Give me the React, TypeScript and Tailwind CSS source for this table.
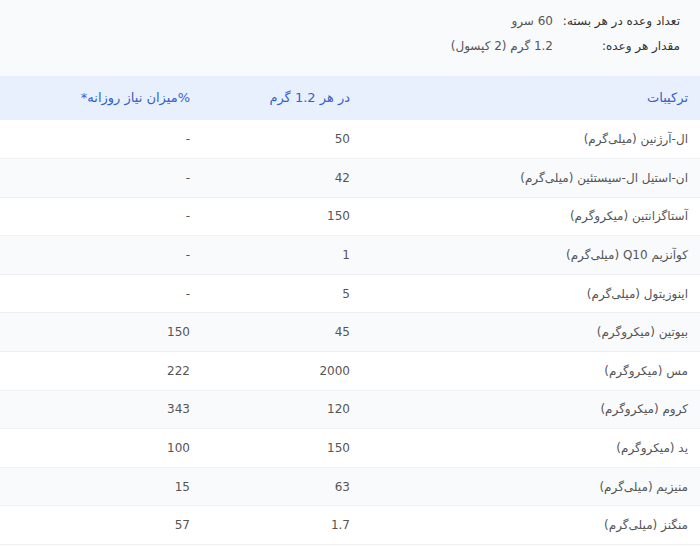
const rows: [string, string, string][] = [
  ['ال-آرژنین (میلی‌گرم)', '50', '-'],
  ['ان-استیل ال-سیستئین (میلی‌گرم)', '42', '-'],
  ['آستاگزانتین (میکروگرم)', '150', '-'],
  ['کوآنزیم Q10 (میلی‌گرم)', '1', '-'],
  ['اینوزیتول (میلی‌گرم)', '5', '-'],
  ['بیوتین (میکروگرم)', '45', '150'],
  ['مس (میکروگرم)', '2000', '222'],
  ['کروم (میکروگرم)', '120', '343'],
  ['ید (میکروگرم)', '150', '100'],
  ['منیزیم (میلی‌گرم)', '63', '15'],
  ['منگنز (میلی‌گرم)', '1.7', '57'],
];

export default function App() {
  return (
    <div
      dir="rtl"
      className="w-[700px] h-[547px] overflow-hidden bg-white text-[#555]"
      style={{ fontFamily: 'Tahoma, "DejaVu Sans", sans-serif' }}
    >
      {/* Serving info */}
      <div className="h-[76px] bg-[#f9fafb] pr-5 pt-[12px] text-[12px] leading-[18px]">
        <div className="flex">
          <span className="w-[127px] text-[#333]">تعداد وعده در هر بسته:</span>
          <span>60 سرو</span>
        </div>
        <div className="flex mt-[7px]">
          <span className="w-[127px] text-[#333]">مقدار هر وعده:</span>
          <span>1.2 گرم (2 کپسول)</span>
        </div>
      </div>

      {/* Table */}
      <table className="w-full border-collapse text-[12px]">
        <thead>
          <tr className="bg-[#e9f0fd] h-[44px] text-[#3461c9] text-[13px]">
            <th className="w-[338px] text-right font-normal px-3">ترکیبات</th>
            <th className="w-[160px] text-right font-normal px-3">در هر 1.2 گرم</th>
            <th className="text-right font-normal px-3">%میزان نیاز روزانه*</th>
          </tr>
        </thead>
        <tbody>
          {rows.map(([name, amount, daily], idx) => (
            <tr
              key={idx}
              className={`h-[38.6px] border-b border-[#eceef1] ${idx % 2 === 1 ? 'bg-[#f9fafb]' : 'bg-white'}`}
            >
              <td className="px-3 text-right">{name}</td>
              <td className="px-3 text-right">{amount}</td>
              <td className="px-3 text-right">{daily}</td>
            </tr>
          ))}
        </tbody>
      </table>
    </div>
  );
}
